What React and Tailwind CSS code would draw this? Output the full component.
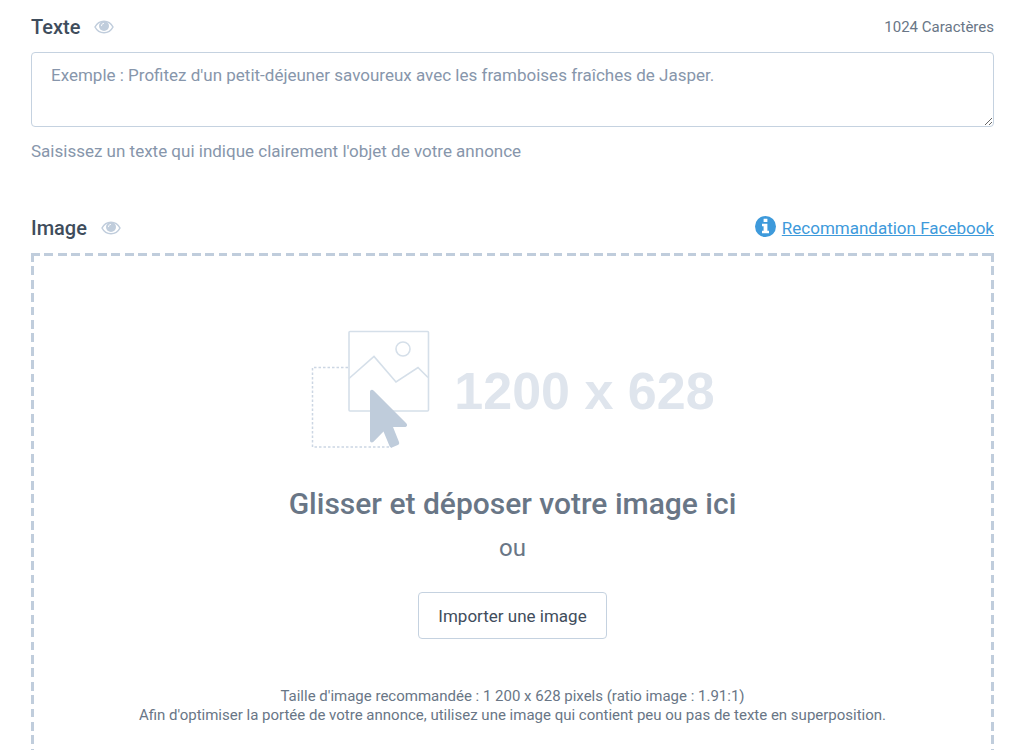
import React, { useRef, useState } from "react";

const MAX_CHARS = 1024;

const EyeIcon = () => (
  <svg viewBox="0 0 20 14" className="w-5 h-[14px]" fill="none" aria-hidden="true">
    <path d="M1 7C3 3.2 6.200 1.200 10 1.200S17 3.200 19 7C17 10.800 13.800 12.800 10 12.800S3 10.800 1 7Z" stroke="#c0cddc" strokeWidth="1.500" />
    <circle cx="10" cy="6" r="5" fill="#c0cddc" />
    <path d="M7.500 5.700C7.500 4.400 8.300 3.500 9.600 3.400" stroke="#fff" strokeWidth="0.900" strokeLinecap="round" />
  </svg>
);

const InfoIcon = () => (
  <svg viewBox="0 0 21 21" className="size-[21px]" aria-hidden="true">
    <circle cx="10.500" cy="10.500" r="10.500" fill="#3e9adb" />
    <path d="M8.600 2.700H12.400V6H8.600ZM7 7.800H12.400V14.800H14V17.300H7V14.800H8.600V10.300H7Z" fill="#fff" />
  </svg>
);

const DropIllustration = () => (
  <svg viewBox="0 0 120 120" className="w-[120px] h-[120px]" fill="none" aria-hidden="true">
    <path d="M38 38.500H2.500V118H82" stroke="#ccd6e3" strokeWidth="1.500" strokeDasharray="2.500 2" />
    <rect x="39" y="2.500" width="79.500" height="79.500" rx="1" stroke="#d5dfe9" strokeWidth="1.600" />
    <circle cx="93" cy="20" r="7" stroke="#d5dfe9" strokeWidth="1.600" />
    <path d="M39 49.500L64 27.500L86 53L108 38.500L118 48.500" stroke="#d5dfe9" strokeWidth="1.600" />
    <path d="M60 63C60 60.700 62.200 60 63.800 61.700L96 94C98 96 97 98 94.500 98H83L89 113C89.500 114.500 89 115.500 87.800 116L82.500 118.300C81 118.900 80 118.300 79.500 117L73.500 102.500L63.500 112.700C62 114.200 60 113.500 60 111.500Z" fill="#bfccdb" />
  </svg>
);

const FieldHeader = ({ htmlFor, label, children }) => (
  <div className="flex items-center justify-between">
    <div className="flex items-center gap-[14px]">
      <label htmlFor={htmlFor} className="text-[20px] leading-6 font-medium text-[#3f4d5c]">{label}</label>
      <EyeIcon />
    </div>
    {children}
  </div>
);

function DropZone({ inputRef, onFile })
{
  return (
    <div
      className="relative mt-[13px] flex flex-col items-center px-8 pt-[76px] pb-16 text-center text-[#697686]"
      onDragOver={(e) => e.preventDefault()}
      onDrop={(e) => {
        e.preventDefault();
        onFile(e.dataTransfer.files[0]);
      }}
    >
      {/* Dashed frame */}
      <div className="absolute inset-x-0 top-0 h-[3px] bg-[length:67px_3px] bg-repeat-x bg-[image:repeating-linear-gradient(90deg,#c0cddc_0_13%,transparent_13%_20%)]" />
      <div className="absolute inset-x-0 bottom-0 h-[3px] bg-[length:67px_3px] bg-repeat-x bg-[image:repeating-linear-gradient(90deg,#c0cddc_0_13%,transparent_13%_20%)]" />
      <div className="absolute inset-y-0 left-0 w-[3px] bg-[length:3px_67px] bg-repeat-y bg-[image:repeating-linear-gradient(180deg,#c0cddc_0_13%,transparent_13%_20%)]" />
      <div className="absolute inset-y-0 right-0 w-[3px] bg-[length:3px_67px] bg-repeat-y bg-[image:repeating-linear-gradient(180deg,#c0cddc_0_13%,transparent_13%_20%)]" />

      <div className="flex items-end gap-6">
        <DropIllustration />
        <span className="pb-7 text-[52px] leading-[60px] font-bold text-[#dfe5ed] font-['Liberation_Sans',sans-serif]">1200 x 628</span>
      </div>
      <h2 className="mt-[35px] text-[30px] leading-10 font-medium">Glisser et déposer votre image ici</h2>
      <p className="mt-2 text-[24px] leading-8">ou</p>
      <button
        type="button"
        className="mt-7 h-[47px] rounded border border-[#c5d2e0] bg-white px-[19px] text-[17px] leading-6 text-[#3f4d5c]"
        onClick={() => inputRef.current.click()}
      >
        Importer une image
      </button>
      <p className="mt-12 text-[15px] leading-[19px]">
        Taille d'image recommandée : 1 200 x 628 pixels (ratio image : 1.91:1)
        <br />
        Afin d'optimiser la portée de votre annonce, utilisez une image qui contient peu ou pas de texte en superposition.
      </p>
    </div>
  );
}

export default function App()
{
  const [text, setText] = useState("");
  const [, setFile] = useState(null);
  const inputRef = useRef(null);

  return (
    <main className="bg-white pl-[31px] pr-[30px] pt-[15px] font-['Roboto',sans-serif]">
      {/* Ad text */}
      <section>
        <FieldHeader htmlFor="ad-text" label="Texte">
          <span className="text-[15px] leading-6 text-[#697686]">{MAX_CHARS - text.length} Caractères</span>
        </FieldHeader>
        <textarea
          id="ad-text"
          className="mt-[13px] block h-[75px] w-full rounded border border-[#c5d2e0] px-[19px] py-[10px] text-[17px] leading-6 text-[#3f4d5c] placeholder:text-[#8796ab]"
          maxLength={MAX_CHARS}
          value={text}
          onChange={(e) => setText(e.target.value)}
          placeholder="Exemple : Profitez d'un petit-déjeuner savoureux avec les framboises fraîches de Jasper."
        />
        <p className="mt-3 text-[17px] leading-6 text-[#8796ab]">Saisissez un texte qui indique clairement l'objet de votre annonce</p>
      </section>

      {/* Ad image */}
      <section className="mt-[53px]">
        <FieldHeader htmlFor="ad-image" label="Image">
          <a href="#recommandation" className="flex items-start gap-[6px] text-[17px] leading-6 text-[#3e9adb]">
            <InfoIcon />
            <span className="underline">Recommandation Facebook</span>
          </a>
        </FieldHeader>
        <input
          id="ad-image"
          ref={inputRef}
          type="file"
          accept="image/*"
          className="hidden"
          onChange={(e) => setFile(e.target.files[0])}
        />
        <DropZone inputRef={inputRef} onFile={setFile} />
      </section>
    </main>
  );
}
